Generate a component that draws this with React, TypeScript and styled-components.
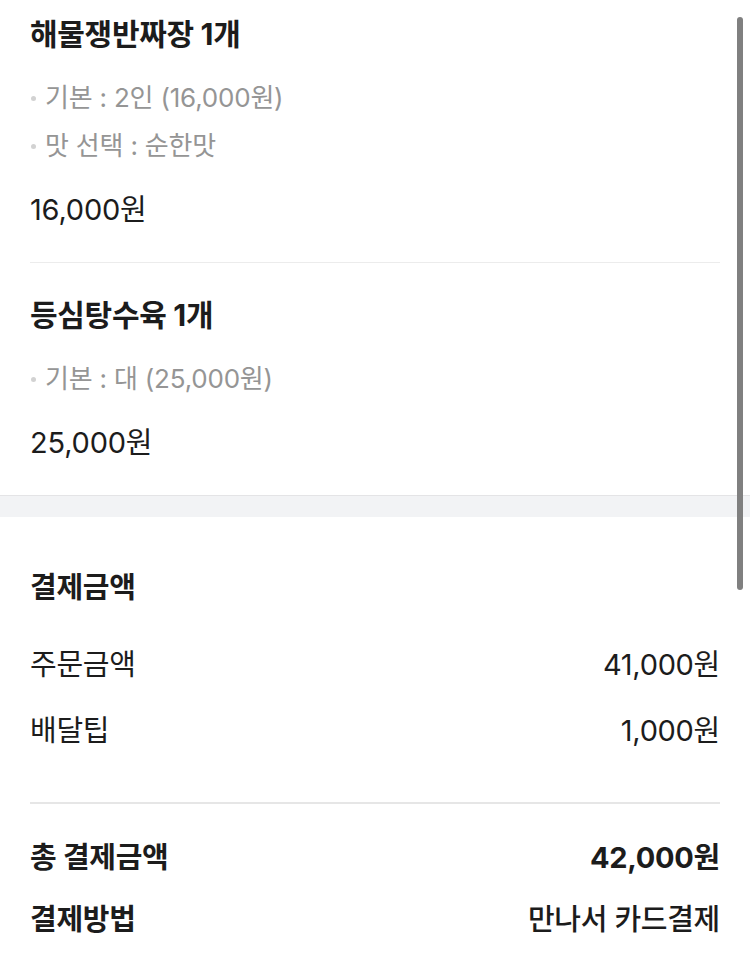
import styled, { createGlobalStyle } from "styled-components";

const GlobalStyle = createGlobalStyle`
  html, body {
    margin: 0;
    padding: 0;
    background: #ffffff;
  }
  body {
    font-family: Inter, "Noto Sans CJK KR", sans-serif;
    color: #1c1c1c;
    -webkit-font-smoothing: antialiased;
  }
`;

const Page = styled.div`
  width: 750px;
  min-height: 963px;
  background: #ffffff;
`;

// Ordered menu list
const orderItems = [
  {
    name: "해물쟁반짜장 1개",
    options: ["기본 : 2인 (16,000원)", "맛 선택 : 순한맛"],
    price: "16,000원",
  },
  {
    name: "등심탕수육 1개",
    options: ["기본 : 대 (25,000원)"],
    price: "25,000원",
  },
];

const StyledMenuList = styled.section`
  padding: 0 30px;
  margin-top: -18px;
`;

const MenuItem = styled.div`
  padding: 34px 0 34px;
  border-bottom: 1px solid #ececec;

  &:last-child {
    border-bottom: none;
  }
`;

const MenuName = styled.h3`
  margin: 0;
  font-size: 30px;
  line-height: 36px;
  font-weight: 700;
  color: #1c1c1c;
  letter-spacing: -0.3px;
`;

const OptionList = styled.ul`
  margin: 22px 0 0;
  padding: 0;
  list-style: none;
`;

const Option = styled.li`
  display: flex;
  align-items: center;
  font-size: 26px;
  line-height: 48px;
  color: #959595;
  white-space: pre;
  letter-spacing: -0.2px;

  &::before {
    content: "";
    width: 5px;
    height: 5px;
    border-radius: 50%;
    background: #d2d2d2;
    margin: 0 9px 0 1px;
  }
`;

const MenuPrice = styled.div`
  margin-top: 22px;
  font-size: 29px;
  line-height: 36px;
  color: #1c1c1c;
  letter-spacing: -0.2px;
`;

function MenuList() {
  return (
    <StyledMenuList>
      {orderItems.map((item) => (
        <MenuItem key={item.name}>
          <MenuName>{item.name}</MenuName>
          <OptionList>
            {item.options.map((opt) => (
              <Option key={opt}>{opt}</Option>
            ))}
          </OptionList>
          <MenuPrice>{item.price}</MenuPrice>
        </MenuItem>
      ))}
    </StyledMenuList>
  );
}

// Gray band between sections
const SectionGap = styled.div`
  height: 21px;
  background: #f2f3f5;
  border-top: 1px solid #e4e4e6;
`;

// Payment summary
const StyledPayment = styled.section`
  padding: 53px 30px 40px;
`;

const SectionTitle = styled.h2`
  margin: 0 0 38px;
  font-size: 29px;
  line-height: 36px;
  font-weight: 700;
  color: #1c1c1c;
  letter-spacing: -0.3px;
`;

const Row = styled.div<{ $strong?: boolean; $gap?: number }>`
  display: flex;
  justify-content: space-between;
  align-items: center;
  height: 36px;
  margin-top: ${(p) => p.$gap ?? 0}px;
  font-size: 29px;
  letter-spacing: -0.3px;
  font-weight: ${(p) => (p.$strong ? 700 : 400)};
  color: #1c1c1c;
`;

const Value = styled.span<{ $weight?: number }>`
  font-weight: ${(p) => p.$weight ?? "inherit"};
`;

const Divider = styled.hr`
  margin: 56px 0 33px;
  border: none;
  height: 2px;
  background: #e6e6e6;
`;

function Payment() {
  return (
    <StyledPayment>
      <SectionTitle>결제금액</SectionTitle>
      <Row>
        <span>주문금액</span>
        <Value>41,000원</Value>
      </Row>
      <Row $gap={30}>
        <span>배달팁</span>
        <Value>1,000원</Value>
      </Row>
      <Divider />
      <Row $strong>
        <span>총 결제금액</span>
        <Value>42,000원</Value>
      </Row>
      <Row $strong $gap={26}>
        <span>결제방법</span>
        <Value $weight={500}>만나서 카드결제</Value>
      </Row>
    </StyledPayment>
  );
}

// Overlay scroll indicator
const ScrollThumb = styled.div`
  position: fixed;
  top: 17px;
  right: 7px;
  width: 6px;
  height: 573px;
  border-radius: 3px;
  background: #808080;
`;

export default function App() {
  return (
    <Page>
      <GlobalStyle />
      <MenuList />
      <SectionGap />
      <Payment />
      <ScrollThumb />
    </Page>
  );
}
